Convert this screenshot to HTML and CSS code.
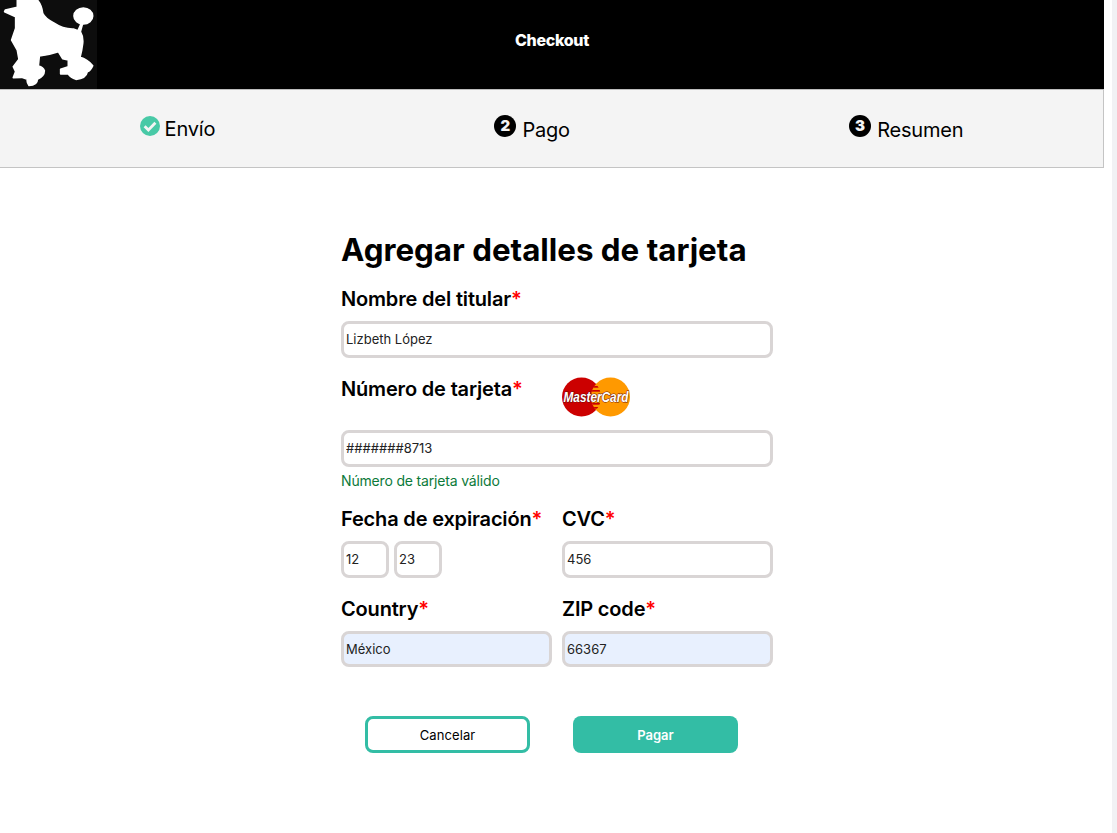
FILE: index.html
```html
<!DOCTYPE html>
<html lang="es">
<head>
<meta charset="utf-8">
<title>Checkout</title>
<link rel="stylesheet" href="styles.css">
</head>
<body>
<div class="page">
  <header class="topbar">
    <div class="logo">
      <svg viewBox="0 0 291 267" width="97" height="89" aria-hidden="true">
        <rect width="291" height="267" fill="#0d0d0d"/>
        <path class="poodle" d="M52 0 L112 0 Q125 15 128 40 Q135 55 160 68 Q190 88 220 87 L234 92 L245 68 L249 66 L241 95 Q250 110 248 130 L245 150 L240 172 Q262 178 278 197 Q272 212 262 215 Q258 236 228 238 Q212 232 205 222 L182 222 L182 208 L205 200 L205 180 L188 176 L175 155 Q145 165 118 168 L115 198 Q130 202 133 212 Q133 228 112 238 Q112 256 87 256 Q80 248 82 238 L65 232 L40 233 L47 215 L40 200 L57 178 L52 150 L35 120 L47 85 L47 50 L14 35 L16 30 L52 22 Z"/>
        <ellipse class="poodle" cx="250" cy="48" rx="28" ry="24"/>
      </svg>
    </div>
    <h1 class="topbar-title">Checkout</h1>
  </header>

  <nav class="steps">
    <div class="step step-done">
      <svg class="step-icon" viewBox="0 0 20 20" aria-hidden="true">
        <circle cx="10" cy="10" r="10" fill="#48c9a6"/>
        <path d="M4.6 10.2 L8.4 14 L15.4 6.8" fill="none" stroke="#f4f4f4" stroke-width="2.8"/>
      </svg>
      <span class="step-text">Envío</span>
    </div>
    <div class="step">
      <span class="step-num">2</span>
      <span class="step-text">Pago</span>
    </div>
    <div class="step">
      <span class="step-num">3</span>
      <span class="step-text">Resumen</span>
    </div>
  </nav>

  <main class="content">
    <form class="card-form">
      <h2 class="form-title">Agregar detalles de tarjeta</h2>

      <label class="field-label">Nombre del titular<span class="req">*</span></label>
      <input class="input" type="text" value="Lizbeth López">

      <div class="number-head">
        <label class="field-label">Número de tarjeta<span class="req">*</span></label>
        <svg class="mc" viewBox="0 0 68 40" width="68" height="40" aria-hidden="true">
          <defs>
            <clipPath id="mc-red"><circle cx="19.5" cy="20" r="19.5"/></clipPath>
            <clipPath id="mc-orange"><circle cx="48.5" cy="20" r="19.5"/></clipPath>
          </defs>
          <circle cx="19.5" cy="20" r="19.5" fill="#cc0000"/>
          <circle cx="48.5" cy="20" r="19.5" fill="#ff9900"/>
          <g clip-path="url(#mc-red)">
            <g clip-path="url(#mc-orange)" fill="#cc0000">
              <rect x="28" y="5" width="14" height="1.7"/>
              <rect x="28" y="9" width="14" height="1.7"/>
              <rect x="28" y="13" width="14" height="1.7"/>
              <rect x="28" y="26" width="14" height="1.7"/>
              <rect x="28" y="30" width="14" height="1.7"/>
              <rect x="28" y="34" width="14" height="1.7"/>
            </g>
          </g>
          <text class="mc-text" x="34" y="25" text-anchor="middle" textLength="65" lengthAdjust="spacingAndGlyphs">MasterCard</text>
        </svg>
      </div>
      <input class="input" type="text" value="#######8713">
      <p class="valid">Número de tarjeta válido</p>

      <div class="two-col row-expiry">
        <div>
          <label class="field-label">Fecha de expiración<span class="req">*</span></label>
          <div class="expiry">
            <input class="input input-small" type="text" value="12">
            <input class="input input-small" type="text" value="23">
          </div>
        </div>
        <div>
          <label class="field-label">CVC<span class="req">*</span></label>
          <input class="input" type="text" value="456">
        </div>
      </div>

      <div class="two-col row-address">
        <div>
          <label class="field-label">Country<span class="req">*</span></label>
          <input class="input input-auto" type="text" value="México">
        </div>
        <div>
          <label class="field-label">ZIP code<span class="req">*</span></label>
          <input class="input input-auto" type="text" value="66367">
        </div>
      </div>

      <div class="actions">
        <button class="btn btn-outline" type="button">Cancelar</button>
        <button class="btn btn-solid" type="button">Pagar</button>
      </div>
    </form>
  </main>
</div>
<div class="scroll-track"></div>
</body>
</html>
```
FILE: styles.css
```css
* { box-sizing: border-box; }
html, body { margin: 0; padding: 0; background: #fff; }
body {
  font-family: Inter, "Liberation Sans", sans-serif;
  color: #000;
  height: 833px;
  overflow: hidden;
}
.page { width: 1104px; }
.scroll-track {
  position: fixed;
  top: 0;
  right: 0;
  bottom: 0;
  width: 5px;
  background: #f1f1f4;
}

.topbar {
  height: 90px;
  background: #000;
  border-bottom: 1px solid #bdbdbd;
  display: flex;
  align-items: flex-start;
  position: relative;
}
.logo { width: 97px; height: 89px; }
.logo svg { display: block; }
.poodle {
  fill: #fff;
  stroke: #fff;
  stroke-width: 5;
  stroke-linejoin: round;
}
.topbar-title {
  position: absolute;
  left: 0;
  right: 0;
  top: 31px;
  margin: 0;
  text-align: center;
  color: #fff;
  font-size: 16px;
  line-height: 19px;
  font-weight: 800;
  letter-spacing: -0.3px;
}

.steps {
  height: 78px;
  background: #f4f4f4;
  border-bottom: 1px solid #c4c4c4;
  border-right: 1px solid #c4c4c4;
  display: flex;
  justify-content: space-around;
  padding-top: 26px;
  font-size: 20px;
  line-height: 28px;
  letter-spacing: -0.2px;
}
.step { display: flex; align-items: flex-start; gap: 6px; }
.step-done { gap: 5px; }
.step-icon { width: 20px; height: 20px; display: block; }
.step-num {
  width: 22px;
  height: 22px;
  margin-top: -1px;
  border-radius: 50%;
  background: #000;
  color: #f4f4f4;
  font-size: 15px;
  line-height: 22px;
  font-weight: 900;
  text-align: center;
  letter-spacing: 0;
}
.step-text { margin-top: 0; }
.step-done .step-text { margin-top: -1px; }

.content { display: flex; justify-content: center; padding-left: 10px; }
.card-form { width: 432px; padding-top: 62px; }
.form-title {
  margin: 0 0 17px;
  font-size: 31.3px;
  line-height: 40px;
  font-weight: 700;
}
.field-label {
  display: block;
  font-size: 20px;
  line-height: 24px;
  font-weight: 600;
  height: 24px;
  margin-bottom: 10px;
  letter-spacing: -0.17px;
}
.req { color: #f00; }
.input {
  display: block;
  width: 100%;
  height: 37px;
  border: 3px solid #d9d5d5;
  border-radius: 8px;
  background: #fff;
  padding: 0 2px 2px;
  font-family: Inter, "Liberation Sans", sans-serif;
  font-size: 13px;
  color: #222;
  outline: none;
}
.input-auto { background: #e8f0fe; height: 36px; padding-bottom: 0; }
.input-small { width: 48px; }
.number-head {
  display: flex;
  margin-top: 18px;
  height: 54px;
}
.number-head .field-label { width: 221px; margin-top: 1px; margin-bottom: 0; }
.mc { display: block; margin-top: 1px; overflow: visible; }
.mc-text {
  font-family: "Liberation Sans", Arial, sans-serif;
  font-size: 14px;
  font-weight: 700;
  font-style: italic;
  fill: #fff;
  stroke: #6a1010;
  stroke-width: 1px;
  paint-order: stroke;
}
.valid {
  margin: 4px 0 0;
  font-size: 14px;
  line-height: 20px;
  color: #0c7a3a;
  letter-spacing: -0.17px;
}
.two-col {
  display: grid;
  grid-template-columns: 211px 211px;
  column-gap: 10px;
}
.row-expiry { margin-top: 16px; }
.row-address { margin-top: 19px; }
.expiry { display: flex; gap: 5px; }
.actions {
  display: flex;
  gap: 43px;
  padding-left: 24px;
  margin-top: 49px;
}
.btn {
  width: 165px;
  height: 37px;
  border-radius: 8px;
  font-family: Inter, "Liberation Sans", sans-serif;
  font-size: 13px;
  font-weight: 400;
  letter-spacing: 0.1px;
  cursor: pointer;
}
.btn-outline { background: #fff; border: 3px solid #33bda5; color: #000; }
.btn-solid { background: #33bda5; border: 0; color: #fff; font-weight: 600; letter-spacing: 0; }
```
